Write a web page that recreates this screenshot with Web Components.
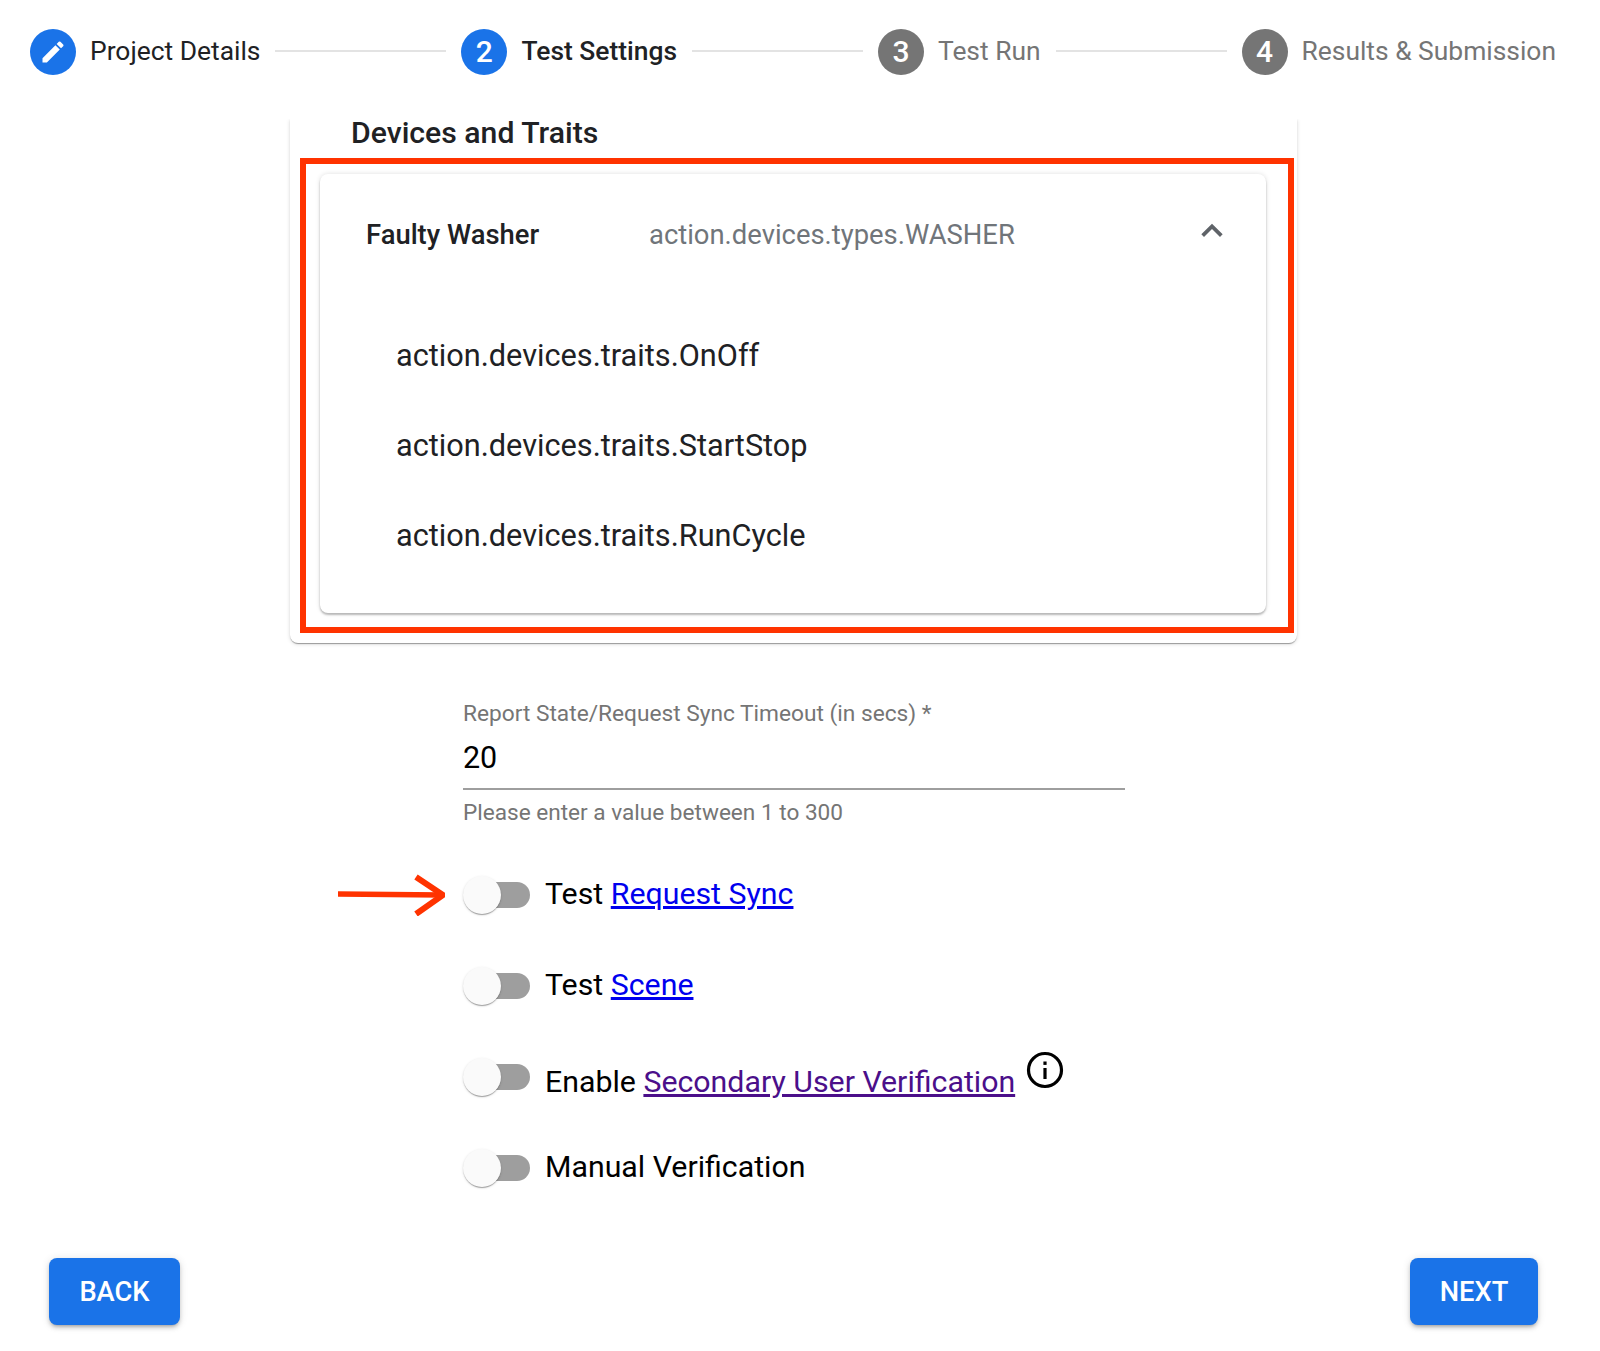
<!DOCTYPE html>
<html lang="en"><head><meta charset="utf-8"><title>Test Settings</title>
<style>
html,body{margin:0;padding:0;background:#fff}
body{width:1600px;height:1351px;overflow:hidden;font-family:Roboto,"Liberation Sans",sans-serif;color:#000}
main{display:block}
</style></head><body>
<main>
<app-stepper>
  <app-step state="done" label="Project Details"></app-step><step-line></step-line>
  <app-step state="active" num="2" label="Test Settings"></app-step><step-line></step-line>
  <app-step num="3" label="Test Run"></app-step><step-line></step-line>
  <app-step num="4" label="Results &amp; Submission"></app-step>
</app-stepper>
<devices-card>
  <device-panel name="Faulty Washer" type="action.devices.types.WASHER">
    <trait-row>action.devices.traits.OnOff</trait-row>
    <trait-row>action.devices.traits.StartStop</trait-row>
    <trait-row>action.devices.traits.RunCycle</trait-row>
  </device-panel>
</devices-card>
<settings-form>
  <timeout-field label="Report State/Request Sync Timeout (in secs) *" value="20" hint="Please enter a value between 1 to 300"></timeout-field>
  <toggle-row arrow>Test <a href="#a">Request Sync</a></toggle-row>
  <toggle-row>Test <a href="#b">Scene</a></toggle-row>
  <toggle-row style="--txt-shift:5px" info>Enable <a class="v" href="#c">Secondary User Verification</a></toggle-row>
  <toggle-row>Manual Verification</toggle-row>
</settings-form>
<nav-bar><blue-button style="width:131px">BACK</blue-button><blue-button style="width:128px">NEXT</blue-button></nav-bar>
</main>
<script>
function def(name,html,init){
  customElements.define(name,class extends HTMLElement{
    constructor(){super();this.attachShadow({mode:'open'}).innerHTML=html;}
    connectedCallback(){if(init)init(this,this.shadowRoot);}
  });
}
def('app-stepper',`<style>:host{display:flex;align-items:center;height:119px;padding:0 44px 16px 30px;box-sizing:border-box}</style><slot></slot>`);
def('step-line',`<style>:host{display:block;flex:1;height:2px;background:#e3e3e3;margin:-1px 15px 0 15px}</style>`);
def('app-step',`<style>
:host{display:flex;align-items:center;gap:14px;font-size:26.4px;color:#757575;white-space:nowrap}
:host([state]){color:#202124}
:host([state=active]){font-weight:500}
.l{margin-top:-2px}
.c{width:46px;height:46px;border-radius:50%;background:#757575;color:#fff;display:flex;align-items:center;justify-content:center;font-size:30px;font-weight:500}
:host([state]) .c{background:#1a73e8}
svg{width:28px;height:28px;display:block}
</style><span class="c"></span><span class="l"></span>`,(h,s)=>{
  s.querySelector('.l').textContent=h.getAttribute('label');
  s.querySelector('.c').innerHTML=h.getAttribute('state')==='done'
    ?'<svg viewBox="0 0 24 24" fill="#fff"><path d="M3 17.25V21h3.75L17.81 9.94l-3.75-3.75L3 17.25zM20.71 7.04a1 1 0 0 0 0-1.41l-2.34-2.34a1 1 0 0 0-1.41 0l-1.83 1.83 3.75 3.75 1.83-1.83z"/></svg>'
    :h.getAttribute('num');
});
def('devices-card',`<style>
:host{display:block;position:relative;width:1007px;height:524px;margin-left:290px;box-sizing:border-box;padding:55px 31px 0 30px;background:#fff;border-radius:0 0 8px 8px;box-shadow:0 2px 1px -1px rgba(0,0,0,.22),0 1px 1px rgba(0,0,0,.16),0 1px 4px rgba(0,0,0,.14);clip-path:inset(0 -8px -8px -8px)}
h2{position:absolute;left:61px;top:-5px;margin:0;font-size:30.2px;line-height:38px;font-weight:500;color:#202124}
.red{position:absolute;left:10px;top:39px;width:994px;height:475px;box-sizing:border-box;border:6px solid #ff3300;pointer-events:none}
</style><h2>Devices and Traits</h2><slot></slot><div class="red"></div>`);
def('device-panel',`<style>
:host{display:block;height:439px;box-sizing:border-box;padding:0 46px;background:#fff;border-radius:8px;box-shadow:0 2px 2px rgba(0,0,0,.24),0 0 5px rgba(0,0,0,.13)}
.h{display:flex;align-items:center;height:122px;font-size:27.4px}
.n{width:283px;font-weight:500;color:#202124}
.t{flex:1;color:#70757a}
svg{width:40px;height:40px;margin:-8px -12px 0 0;display:block}
.b{padding:14px 0 0 30px}
</style><div class="h"><span class="n"></span><span class="t"></span><svg viewBox="0 0 24 24" fill="#5f6368"><path d="M12 7.6L5.6 14l1.6 1.6L12 10.8l4.8 4.8 1.6-1.6z"/></svg></div><div class="b"><slot></slot></div>`,(h,s)=>{
  s.querySelector('.n').textContent=h.getAttribute('name');
  s.querySelector('.t').textContent=h.getAttribute('type');
});
def('trait-row',`<style>:host{display:flex;align-items:center;height:90px;font-size:30.7px;color:#202124}</style><slot></slot>`);
def('settings-form',`<style>:host{display:block;width:662px;margin:56px 0 0 463px;position:relative}</style><slot></slot>`);
def('timeout-field',`<style>
:host{display:block;height:150px}
.l{font-size:22.7px;line-height:30px;color:#757575;white-space:nowrap}
.v{font-size:30.5px;line-height:48px;padding:6px 0 6px;height:63px;box-sizing:border-box;border-bottom:2px solid #9e9e9e;margin-top:-2px;display:flex;align-items:center;letter-spacing:-.2px}
.h{font-size:22.6px;line-height:30px;color:#757575;margin-top:8px}
</style><div class="l"></div><div class="v"></div><div class="h"></div>`,(h,s)=>{
  s.querySelector('.l').textContent=h.getAttribute('label');
  s.querySelector('.v').textContent=h.getAttribute('value');
  s.querySelector('.h').textContent=h.getAttribute('hint');
});
def('toggle-row',`<style>
:host{display:flex;align-items:center;height:91px;font-size:30.3px;color:#000;position:relative;white-space:nowrap}
.sw{position:relative;width:67px;height:26px;flex:none;margin-right:15px}
.tr{position:absolute;inset:0 0 0 20px;background:#9e9e9e;border-radius:13px}
.th{position:absolute;left:0;top:-6px;width:38px;height:38px;border-radius:50%;background:#fafafa;box-shadow:0 2px 1px -1px rgba(0,0,0,.2),0 1px 1px rgba(0,0,0,.14),0 1px 3px rgba(0,0,0,.12)}
.t{transform:translateY(var(--txt-shift,-1px))}
.info{width:38px;height:38px;margin:-14px 0 0 11px;display:none;flex:none}
:host([info]) .info{display:block}
.arrow{position:absolute;left:-125px;top:50%;margin-top:-21px;width:107px;height:42px;display:none}
:host([arrow]) .arrow{display:block}
::slotted(a){color:#0000ee}
::slotted(a.v){color:#4b0f8a}
</style><svg class="arrow" viewBox="0 0 107 42"><path d="M0 20L104 21" stroke="#ff3300" stroke-width="5.5" fill="none"/><path d="M78 3L105 21L78 40" stroke="#ff3300" stroke-width="6" fill="none"/></svg><span class="sw"><span class="tr"></span><span class="th"></span></span><span class="t"><slot></slot></span><svg class="info" viewBox="0 0 38 38"><circle cx="19" cy="19" r="16.5" fill="none" stroke="#000" stroke-width="3.2"/><rect x="17.4" y="17" width="3.2" height="11" fill="#000"/><rect x="17.4" y="10.5" width="3.2" height="3.4" fill="#000"/></svg>`);
def('nav-bar',`<style>:host{display:flex;justify-content:space-between;padding:0 62px 0 49px;margin-top:45px}</style><slot></slot>`);
def('blue-button',`<style>
:host{display:flex;align-items:center;justify-content:center;height:67px;box-sizing:border-box;background:#1a73e8;color:#fff;border-radius:8px;font-size:27.3px;font-weight:500;box-shadow:0 3px 3px -2px rgba(0,0,0,.2),0 3px 4px rgba(0,0,0,.14),0 1px 8px rgba(0,0,0,.12)}
</style><slot></slot>`);
</script>
</body></html>
